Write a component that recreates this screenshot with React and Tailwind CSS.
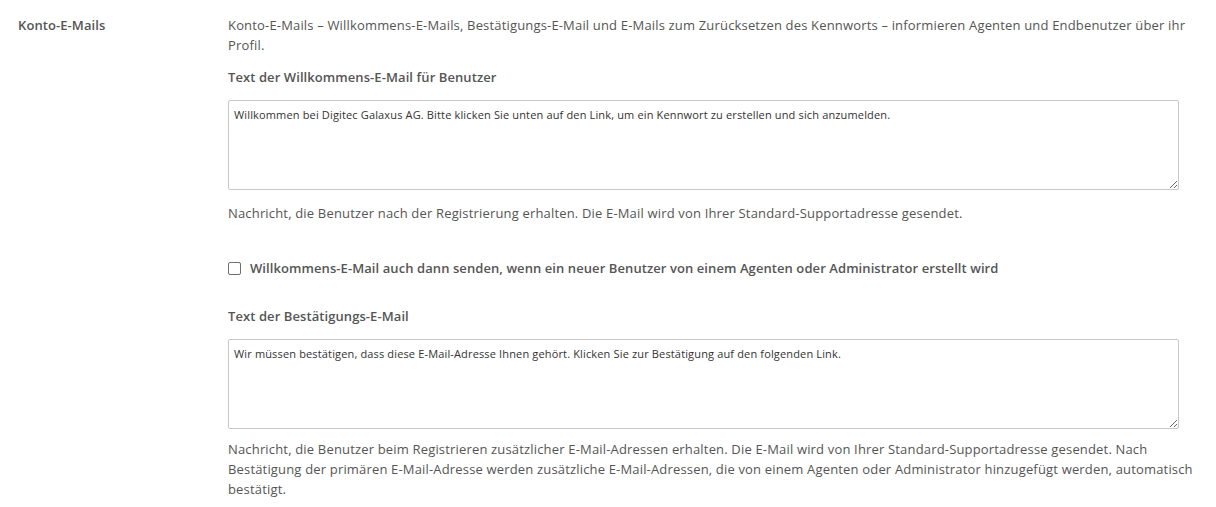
export default function App() {
  return (
    <div className="min-h-[507px] bg-white font-['Open_Sans','Noto_Sans',sans-serif] text-[13px] text-[#555555]">
      <div className="flex">
        {/* Section label */}
        <div className="w-[228px] shrink-0 pl-[18px] pt-[15px]">
          <h3 className="leading-[20px] font-semibold tracking-[0.08px] text-[#555555]">Konto-E-Mails</h3>
        </div>

        {/* Settings column */}
        <div className="flex-1 pr-[22px] pt-[15px]">
          <p className="leading-[20px] tracking-[0.17px]">
            Konto-E-Mails – Willkommens-E-Mails, Bestätigungs-E-Mail und E-Mails zum Zurücksetzen des Kennworts – informieren Agenten und Endbenutzer über ihr Profil.
          </p>

          <label className="mt-[12px] block leading-[20px] font-semibold tracking-[0.08px]">Text der Willkommens-E-Mail für Benutzer</label>
          <textarea
            readOnly
            className="mt-[13px] block h-[90px] w-[951px] resize-y rounded-[2px] border border-[#c8c8c8] px-[5px] py-[6px] text-[11px] leading-[16px] tracking-[0.15px] text-[#333333] outline-none"
            defaultValue="Willkommen bei Digitec Galaxus AG. Bitte klicken Sie unten auf den Link, um ein Kennwort zu erstellen und sich anzumelden."
          />
          <p className="mt-[13px] leading-[20px] tracking-[0.17px]">
            Nachricht, die Benutzer nach der Registrierung erhalten. Die E-Mail wird von Ihrer Standard-Supportadresse gesendet.
          </p>

          <label className="mt-[35px] flex items-center gap-[9px] leading-[20px] font-semibold tracking-[0.08px]">
            <span className="h-[13px] w-[13px] shrink-0 rounded-[2px] border border-[#6e6e6e] bg-white" />
            <span>Willkommens-E-Mail auch dann senden, wenn ein neuer Benutzer von einem Agenten oder Administrator erstellt wird</span>
          </label>

          <label className="mt-[28px] block leading-[20px] font-semibold tracking-[0.08px]">Text der Bestätigungs-E-Mail</label>
          <textarea
            readOnly
            className="mt-[13px] block h-[90px] w-[951px] resize-y rounded-[2px] border border-[#c8c8c8] px-[5px] py-[6px] text-[11px] leading-[16px] tracking-[0.15px] text-[#333333] outline-none"
            defaultValue="Wir müssen bestätigen, dass diese E-Mail-Adresse Ihnen gehört. Klicken Sie zur Bestätigung auf den folgenden Link."
          />
          <p className="mt-[10px] leading-[20px] tracking-[0.17px]">
            Nachricht, die Benutzer beim Registrieren zusätzlicher E-Mail-Adressen erhalten. Die E-Mail wird von Ihrer Standard-Supportadresse gesendet. Nach Bestätigung der primären E-Mail-Adresse werden zusätzliche E-Mail-Adressen, die von einem Agenten oder Administrator hinzugefügt werden, automatisch bestätigt.
          </p>
        </div>
      </div>
    </div>
  );
}
